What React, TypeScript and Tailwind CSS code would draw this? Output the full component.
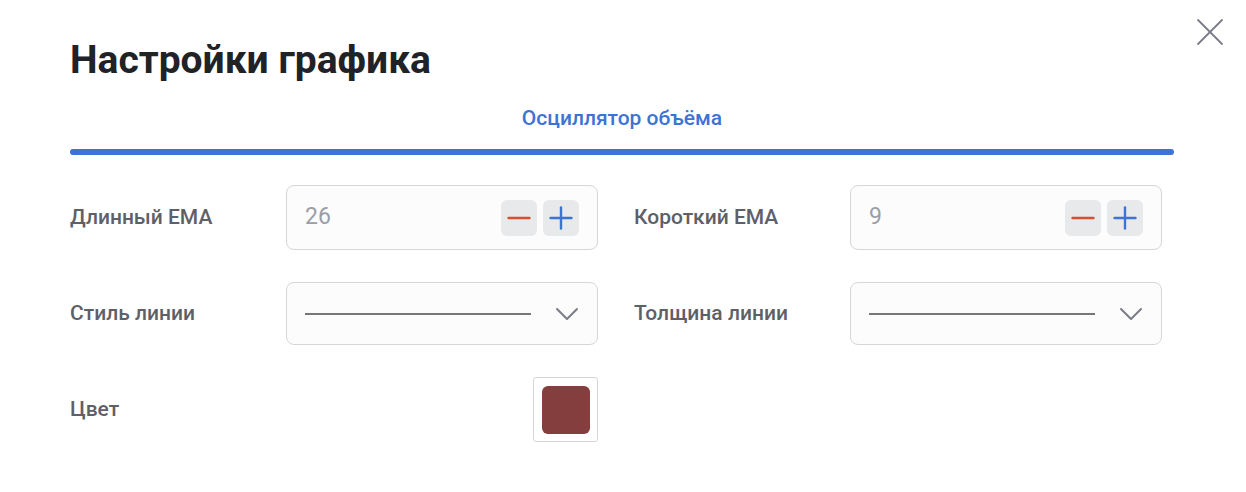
import { Minus, Plus, ChevronDown, X } from "lucide-react";

function Stepper({ value }: { value: string }) {
  return (
    <div className="flex h-[65px] w-[312px] items-center justify-between rounded-lg border border-[#d5d6d9] bg-[#fcfcfc] pl-[18px] pr-[18px]">
      <span className="text-[23px] text-[#9a9ea5]">{value}</span>
      <div className="flex gap-[6px]">
        <button className="flex h-[36px] w-[36px] items-center justify-center rounded-md bg-[#e8e9eb]">
          <Minus className="h-[36px] w-[36px] text-[#d4502f]" strokeWidth={1.6} />
        </button>
        <button className="flex h-[36px] w-[36px] items-center justify-center rounded-md bg-[#e8e9eb]">
          <Plus className="h-[36px] w-[36px] text-[#3d72d6]" strokeWidth={1.6} />
        </button>
      </div>
    </div>
  );
}

function LineSelect() {
  return (
    <div className="flex h-[63px] w-[312px] items-center rounded-lg border border-[#d5d6d9] bg-[#fcfcfc] pl-[18px] pr-[10px]">
      <div className="h-[2px] w-[226px] bg-[#77777a]" />
      <ChevronDown className="ml-auto h-[40px] w-[40px] text-[#7a7d85]" strokeWidth={1.2} />
    </div>
  );
}

function Label({ children }: { children: string }) {
  return <div className="w-[216px] text-[21px] font-medium text-[#5d6068]">{children}</div>;
}

export default function App() {
  return (
    <div className="relative h-[492px] w-[1246px] bg-white font-['Roboto',sans-serif]">
      <button className="absolute right-[12px] top-[8px] text-[#7b7e86]">
        <X className="h-[48px] w-[48px]" strokeWidth={0.9} />
      </button>
      <div className="pl-[70px] pr-[72px] pt-[34px]">
        <h1 className="text-[39px] font-bold leading-[52px] text-[#202226]">Настройки графика</h1>
        <div className="mt-[18px] text-center text-[21px] font-medium leading-[28px] text-[#3d72d6]">
          Осциллятор объёма
        </div>
        <div className="mt-[17px] h-[6px] rounded-full bg-[#3d72d6]" />
        <div className="mt-[30px] flex flex-col gap-[32px]">
          <div className="flex items-center">
            <Label>Длинный EMA</Label>
            <Stepper value="26" />
            <div className="w-[36px]" />
            <Label>Короткий EMA</Label>
            <Stepper value="9" />
          </div>
          <div className="flex items-center">
            <Label>Стиль линии</Label>
            <LineSelect />
            <div className="w-[36px]" />
            <Label>Толщина линии</Label>
            <LineSelect />
          </div>
          <div className="flex items-center">
            <Label>Цвет</Label>
            <div className="flex w-[312px] justify-end">
              <div className="flex h-[65px] w-[65px] items-center justify-center rounded-[3px] border border-[#d5d6d9]">
                <div className="h-[48px] w-[48px] rounded-md bg-[#853e3e]" />
              </div>
            </div>
          </div>
        </div>
      </div>
    </div>
  );
}
